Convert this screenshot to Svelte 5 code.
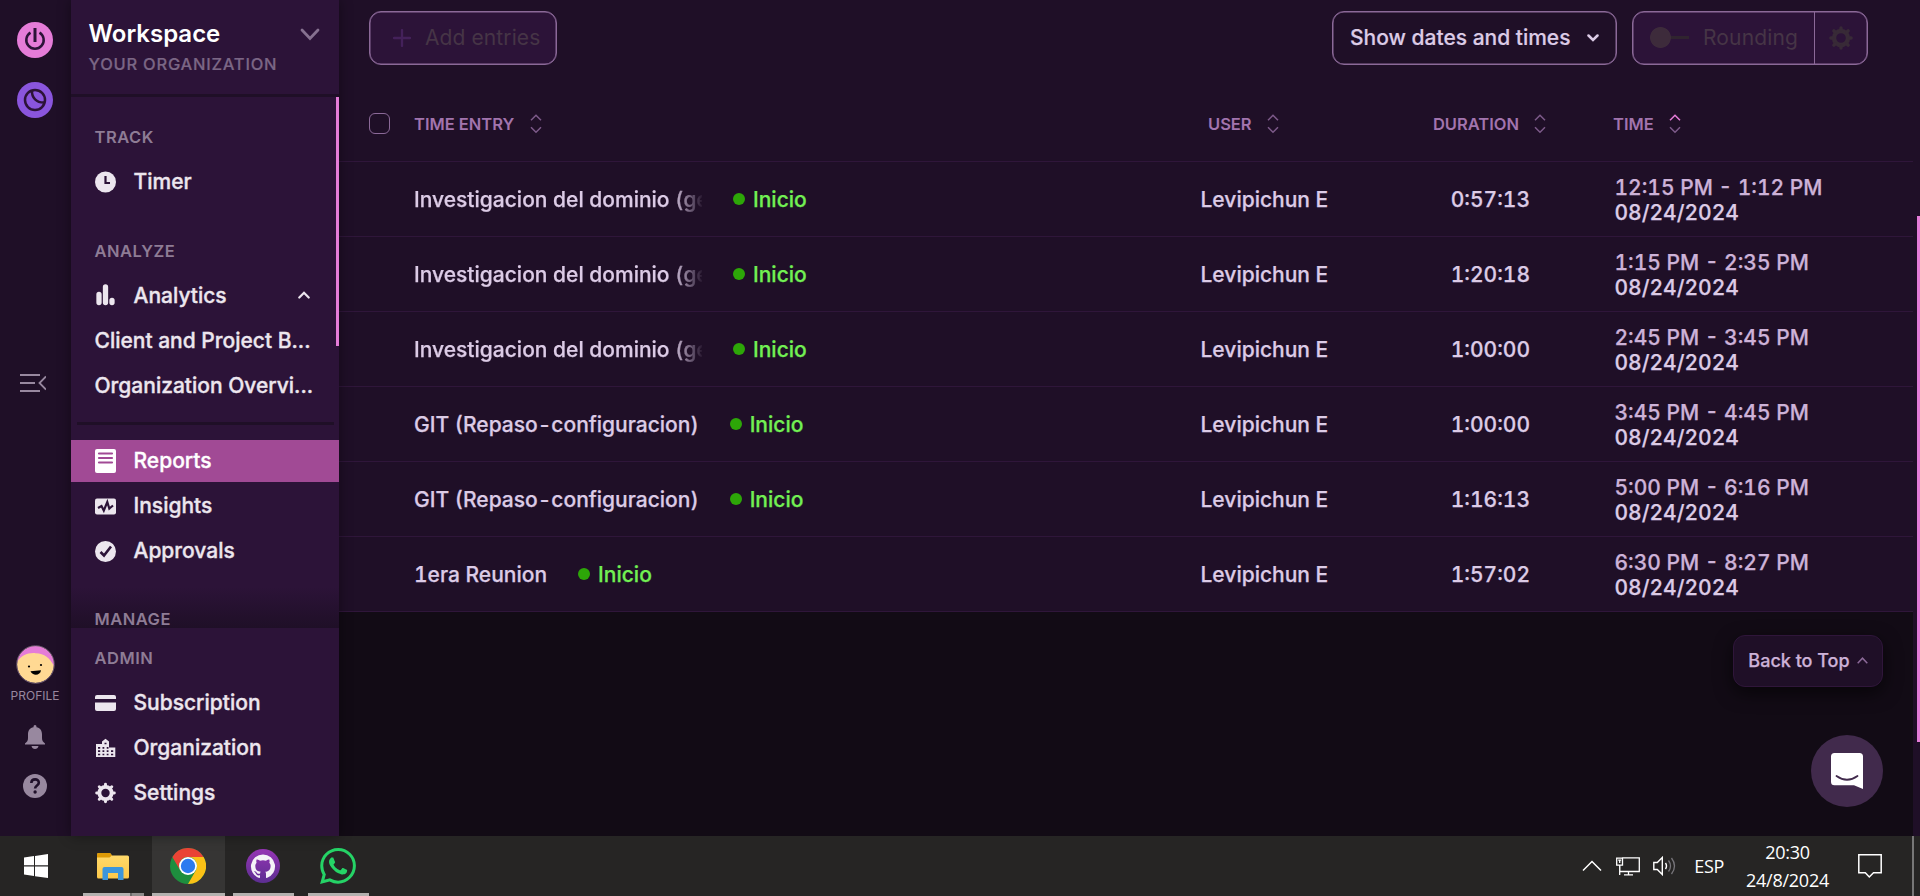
<script>
  const rows = [
    { name: 'Investigacion del dominio (ge', fade: true, dur: '0:57:13', time: '12:15 PM - 1:12 PM' },
    { name: 'Investigacion del dominio (ge', fade: true, dur: '1:20:18', time: '1:15 PM - 2:35 PM' },
    { name: 'Investigacion del dominio (ge', fade: true, dur: '1:00:00', time: '2:45 PM - 3:45 PM' },
    { name: 'GIT (Repaso-configuracion)', dur: '1:00:00', time: '3:45 PM - 4:45 PM' },
    { name: 'GIT (Repaso-configuracion)', dur: '1:16:13', time: '5:00 PM - 6:16 PM' },
    { name: '1era Reunion', dur: '1:57:02', time: '6:30 PM - 8:27 PM' }
  ];
  const teeth = [0, 45, 90, 135, 180, 225, 270, 315];
</script>

{#snippet sort(up)}
  <svg class="sort" class:up width="12" height="20" viewBox="0 0 12 20"><path class="a" d="M1 6.2 6 1.2l5 5" /><path d="M1 13.3l5 5 5-5" /></svg>
{/snippet}

{#snippet gear(size, color)}
  <svg width={size} height="24" viewBox="0 0 24 24"><g fill="none" stroke={color}><circle cx="12" cy="12" r="7" stroke-width="4.400" />{#each teeth as t}<path d="M12 3.500V1.900" stroke-width="3.400" stroke-linecap="round" transform="rotate({t} 12 12)" />{/each}</g></svg>
{/snippet}

<div class="screen">
  <div class="app">
    <aside class="rail">
      <div class="top">
        <svg width="36" height="36" viewBox="0 0 36 36"><circle cx="18" cy="18" r="18" fill="#e57cd8" /><path d="M13.5 10.6a8.7 8.7 0 1 0 9 0" fill="none" stroke="#2c1338" stroke-width="2.5" /><path d="M18 6v14" stroke="#2c1338" stroke-width="3" /></svg>
        <svg width="36" height="36" viewBox="0 0 36 36"><circle cx="18" cy="18" r="18" fill="#8a55dd" /><g fill="none" stroke="#2c1338" stroke-width="2.5"><circle cx="18" cy="18" r="10" /><path d="M15 8.5c-.5 7 4.500 12.500 12.700 12" /></g></svg>
      </div>
      <svg class="collapse" width="26" height="20" viewBox="0 0 26 20"><path d="M0 2h20M0 10h15M0 18h20M26 3.500l-6.500 6.500 6.500 6.500" fill="none" stroke="#98889f" stroke-width="1.8" /></svg>
      <div class="bottom">
        <svg width="39" height="39" viewBox="0 0 39 39"><defs><clipPath id="face"><circle cx="19.500" cy="19.500" r="18.500" /></clipPath></defs><g clip-path="url(#face)"><rect width="39" height="39" fill="#ffd993" /><path d="M0 19C4 11 11 7.500 19.500 8.200C28 8 34 13 38 21V0H0z" fill="#e57cd8" /></g><circle cx="19.500" cy="19.500" r="18.800" fill="none" stroke="#6d5a72" stroke-width="1" /><circle cx="13" cy="21.500" r="1.100" /><circle cx="25" cy="20" r="1.100" /><path d="M14.500 26.300l10.500-1c-.5 5.500-8.500 6-10.500 1z" /></svg>
        <span>PROFILE</span>
        <svg class="bell" width="20" height="25" viewBox="0 0 20 25"><path d="M10 0c1 0 1.500.7 1.500 2.300C15 3 17 5.500 17 9.500V13c0 2.500 1 4 3 5.500V19.500H0V18.500C2 17 3 15.500 3 13V9.500C3 5.500 5 3 8.500 2.300 8.500.7 9 0 10 0zM6.500 21h7c-.5 4-6.500 4-7 0z" fill="#98889f" /></svg>
        <svg width="24" height="24" viewBox="0 0 24 24"><circle cx="12" cy="12" r="12" fill="#98889f" /><path d="M8.300 9c.2-5 7.700-4.600 7.500-.3 0 2.800-3.700 2.700-3.700 5.800" fill="none" stroke="#20102a" stroke-width="2.600" /><circle cx="12.100" cy="18" r="1.700" fill="#20102a" /></svg>
      </div>
    </aside>

    <nav class="side">
      <header>
        <div class="ws"><b>Workspace</b><svg width="20" height="13" viewBox="0 0 20 13"><path d="M2 2l8 8.500L18 2" fill="none" stroke="#867190" stroke-width="2.800" stroke-linecap="round" /></svg></div>
        <small>YOUR ORGANIZATION</small>
      </header>
      <div class="scroll">
        <h4 class="first">TRACK</h4>
        <div class="item"><svg width="21" height="24" viewBox="0 0 21 24"><circle cx="10.500" cy="13" r="10.500" fill="#ece6ee" /><path d="M10.500 7v7H15" fill="none" stroke="#2c1338" stroke-width="2.200" /></svg>Timer</div>
        <h4 class="second">ANALYZE</h4>
        <div class="item"><svg width="21" height="24" viewBox="0 0 21 24"><path d="M4 11.500V19.500M10.500 4v15.500M17 17.300v2.200" stroke="#ece6ee" stroke-width="5.300" stroke-linecap="round" /></svg>Analytics<svg class="chev" width="12" height="8" viewBox="0 0 12 8"><path d="M1.300 6.500 6 1.800l4.700 4.700" fill="none" stroke="#ece6ee" stroke-width="2.200" stroke-linecap="round" /></svg></div>
        <div class="item plain">Client and Project B...</div>
        <div class="item plain">Organization Overvi...</div>
        <hr />
        <div class="item active"><svg width="21" height="24" viewBox="0 0 21 24"><rect width="21" height="24" rx="2" fill="#fff" /><path d="M4 4.500h13M4 9h13M4 13.500h13" stroke="#a14a95" stroke-width="2.200" stroke-linecap="round" /></svg>Reports</div>
        <div class="item"><svg width="21" height="24" viewBox="0 0 21 24"><rect y="4.500" width="21" height="16" rx="2" fill="#ece6ee" /><path d="M3 14l3.500-2 2.300 4.500L12.300 8l2 6.500L18 11.500" fill="none" stroke="#2c1338" stroke-width="2.200" /></svg>Insights</div>
        <div class="item"><svg width="21" height="24" viewBox="0 0 21 24"><circle cx="10.500" cy="12.500" r="10.500" fill="#ece6ee" /><path d="M5.500 13l3.500 3.500 7-9" fill="none" stroke="#2c1338" stroke-width="2.600" /></svg>Approvals</div>
        <h4 class="manage">MANAGE</h4>
      </div>
      <div class="admin">
        <h4>ADMIN</h4>
        <div class="item"><svg width="21" height="24" viewBox="0 0 21 24"><path d="M2 5h17a2 2 0 0 1 2 2v2H0V7a2 2 0 0 1 2-2zM0 12.500h21V19a2 2 0 0 1-2 2H2a2 2 0 0 1-2-2z" fill="#ece6ee" /></svg>Subscription</div>
        <div class="item"><svg width="21" height="24" viewBox="0 0 21 24"><path d="M1 9h6V6.500L10.500 3.800 14 6.500V12.500h6.300V22H1z" fill="#ece6ee" /><path d="M3 12.800h2.200M3 16.200h2.200M3 19.500h2.200M7.500 12.800h1.800M7.500 16.200h1.800M7.500 19.500h1.800M11.700 12.800h1.800M11.700 16.200h1.800M11.700 19.500h1.800M16 16.200h2.200M16 19.500h2.200M9.500 8.500h2" stroke="#2c1338" stroke-width="1.700" /></svg>Organization</div>
        <div class="item gearitem">{@render gear(21, '#ece6ee')}Settings</div>
      </div>
      <i class="thumb"></i>
    </nav>

    <main>
      <div class="toolbar">
        <div class="btn add"><svg width="18" height="18" viewBox="0 0 18 18"><path d="M9 1v16M1 9h16" stroke="#44215a" stroke-width="2.300" stroke-linecap="round" /></svg>Add entries</div>
        <div class="btn show">Show dates and times<svg width="12" height="8" viewBox="0 0 12 8"><path d="M1.500 1.500 6 6l4.500-4.500" fill="none" stroke="#dccbe6" stroke-width="2.500" stroke-linecap="round" /></svg></div>
        <div class="btn round">
          <div class="tog"><i></i>Rounding</div>
          <div class="cog">{@render gear(24, '#382a37')}</div>
        </div>
      </div>
      <div class="table">
        <div class="row head">
          <div class="c1"><i class="check"></i>TIME ENTRY{@render sort(false)}</div>
          <div class="c2">USER{@render sort(false)}</div>
          <div class="c3">DURATION{@render sort(false)}</div>
          <div class="c4">TIME{@render sort(true)}</div>
        </div>
        {#each rows as r}
          <div class="row">
            <div class="c1"><span class="name" class:fade={r.fade}>{r.name}</span><i class="dot"></i><span class="proj">Inicio</span></div>
            <div class="c2">Levipichun E</div>
            <div class="c3">{r.dur}</div>
            <div class="c4"><span>{r.time}</span><span>08/24/2024</span></div>
          </div>
        {/each}
      </div>
      <i class="track"></i>
      <div class="totop">Back to Top<svg width="11" height="7" viewBox="0 0 11 7"><path d="M.7 6.200 5.500 1.200l4.800 5" fill="none" stroke="#8c6a99" stroke-width="1.500" /></svg></div>
      <div class="chat"><svg width="32" height="36" viewBox="0 0 32 36"><path d="M3.500 0h25A3.500 3.500 0 0 1 32 3.500V36l-9-3.700H3.500A3.500 3.500 0 0 1 0 28.800V3.500A3.500 3.500 0 0 1 3.500 0z" fill="#fff" /><path d="M5.500 23q10.500 7.500 21 0" fill="none" stroke="#412a4c" stroke-width="1.800" stroke-linecap="round" /></svg></div>
    </main>
  </div>

  <footer>
    <div class="task start"><svg width="24" height="24" viewBox="0 0 24 24"><path d="M0 3.500 10 2v9.300H0zM11 1.900 24 0v11.300H11zM0 12.500h10V22L0 20.500zM11 12.500h13V24L11 22.200z" fill="#fff" /></svg></div>
    <div class="task files"><svg width="32" height="28" viewBox="0 0 32 28"><defs><linearGradient id="fold" x1="0" y1="0" x2="0" y2="1"><stop offset="0" stop-color="#ffdb6e" /><stop offset="1" stop-color="#fdc94a" /></linearGradient></defs><path d="M0 1.500Q0 0 1.500 0H13l2 2.500h15.500Q32 2.500 32 4v20q0 1.500-1.500 1.500h-29Q0 25.500 0 24z" fill="url(#fold)" /><path d="M0 4.500V1.500Q0 0 1.500 0H13l2 2.500-2.500 2z" fill="#dd9a06" /><path d="M5.500 27V16q0-2 2-2h17q2 0 2 2v11H21v-7H11v7z" fill="#3c96dc" /></svg></div>
    <div class="task chrome"><svg width="36" height="36" viewBox="0 0 36 36"><circle cx="18" cy="18" r="18" fill="#1e8e3e" /><path d="M2.400 9A18 18 0 0 1 33.600 9H18a9 9 0 0 0-7.800 13.500z" fill="#ea4335" /><path d="M33.600 9A18 18 0 0 1 18 36l7.800-13.500A9 9 0 0 0 18 9z" fill="#fbc116" /><circle cx="18" cy="18" r="9" fill="#fff" /><circle cx="18" cy="18" r="7.200" fill="#2c7bf0" /></svg></div>
    <div class="task git"><svg width="34" height="34" viewBox="0 0 34 34"><defs><linearGradient id="gh" x1="0" y1="0" x2="0" y2="1"><stop offset="0" stop-color="#9535b4" /><stop offset="1" stop-color="#5c2e91" /></linearGradient></defs><circle cx="17" cy="17" r="17" fill="url(#gh)" /><path transform="translate(5 5.200)" fill="#f4f2f7" d="M12 .3a12 12 0 0 0-3.800 23.400c.6.1.8-.3.8-.6v-2c-3.300.7-4-1.600-4-1.600-.600-1.400-1.400-1.800-1.400-1.800-1-.700.1-.700.1-.700 1.200 0 1.900 1.200 1.900 1.200 1 1.800 2.800 1.300 3.500 1 0-.8.4-1.300.7-1.600-2.700-.3-5.500-1.300-5.500-6 0-1.200.5-2.300 1.300-3.100-.2-.4-.6-1.600 0-3.200 0 0 1-.3 3.400 1.200a11.500 11.500 0 0 1 6 0c2.300-1.500 3.300-1.200 3.300-1.200.6 1.600.2 2.800 0 3.200.9.800 1.300 1.900 1.300 3.200 0 4.600-2.800 5.600-5.500 5.900.5.4.9 1 .9 2.200v3.300c0 .3.1.7.8.6A12 12 0 0 0 12 .3" /></svg></div>
    <div class="task wa"><svg width="36" height="36" viewBox="0 0 24 24"><path fill="#25d366" d="M17.472 14.382c-.297-.149-1.758-.867-2.030-.967-.273-.099-.471-.148-.670.150-.197.297-.767.966-.940 1.164-.173.199-.347.223-.644.075-.297-.150-1.255-.463-2.390-1.475-.883-.788-1.480-1.761-1.653-2.059-.173-.297-.018-.458.130-.606.134-.133.298-.347.446-.520.149-.174.198-.298.298-.497.099-.198.050-.371-.025-.520-.075-.149-.669-1.612-.916-2.207-.242-.579-.487-.500-.669-.510-.173-.008-.371-.010-.570-.010-.198 0-.520.074-.792.372-.272.297-1.040 1.016-1.040 2.479 0 1.462 1.065 2.875 1.213 3.074.149.198 2.096 3.200 5.077 4.487.709.306 1.262.489 1.694.625.712.227 1.360.195 1.871.118.571-.085 1.758-.719 2.006-1.413.248-.694.248-1.289.173-1.413-.074-.124-.272-.198-.570-.347m-5.421 7.403h-.004a9.870 9.870 0 0 1-5.031-1.378l-.361-.214-3.741.982.998-3.648-.235-.374a9.860 9.860 0 0 1-1.510-5.260c.001-5.450 4.436-9.884 9.888-9.884 2.640 0 5.122 1.030 6.988 2.898a9.825 9.825 0 0 1 2.893 6.994c-.003 5.450-4.437 9.884-9.885 9.884m8.413-18.297A11.815 11.815 0 0 0 12.050 0C5.495 0 .160 5.335.157 11.892c0 2.096.547 4.142 1.588 5.945L.057 24l6.305-1.654a11.882 11.882 0 0 0 5.683 1.448h.005c6.554 0 11.890-5.335 11.893-11.893a11.821 11.821 0 0 0-3.480-8.413Z" /></svg></div>
    <div class="tray">
      <svg class="t1" width="20" height="12" viewBox="0 0 20 12"><path d="M1 10.500 10 1.500l9 9" fill="none" stroke="#fff" stroke-width="1.500" /></svg>
      <svg class="t2" width="24" height="19" viewBox="0 0 24 19"><path d="M6 .8h17.300v13.700H3.800V8.500M12.500 14.500v3M8 17.800h9M.7 1.200h5.800v7H.7zM2.200 3.200h3M3.700 3v3M3.700 8v10" fill="none" stroke="#fff" stroke-width="1.300" /></svg>
      <svg class="t3" width="23" height="20" viewBox="0 0 23 20"><path d="M.8 6.500h3.500l5-5v17l-5-5H.8zM12.500 7q2 3 0 6" fill="none" stroke="#fff" stroke-width="1.400" /><path d="M15.500 4.500q4 5.500 0 11M18.500 2q6 8 0 16" fill="none" stroke="#77757a" stroke-width="1.300" /></svg>
      <span class="lang">ESP</span>
      <div class="clock"><span>20:30</span><span>24/8/2024</span></div>
      <svg class="note" width="24" height="25" viewBox="0 0 24 25"><path d="M.8.8h22.400v18H15.500L11.300 23 7.300 18.800H.8z" fill="none" stroke="#fff" stroke-width="1.500" /></svg>
      <i class="peek"></i>
    </div>
  </footer>
</div>

<style>
  :global(body) { background: #120b15; overflow: hidden; }
  .screen { width: 1920px; height: 896px; display: flex; flex-direction: column; font-family: Inter, sans-serif; font-size: 21px; font-weight: 500; overflow: hidden; box-sizing: border-box; }
  .screen * { box-sizing: border-box; }
  svg { display: block; flex: none; }
  .app { height: 836px; display: flex; }
  .rail { width: 71px; background: #1f0f27; display: flex; flex-direction: column; align-items: center; padding: 22px 1px 38px 0; }
  .top { display: flex; flex-direction: column; gap: 24px; }
  .collapse { margin: 255px 4px 0 0; }
  .bottom { margin-top: auto; display: flex; flex-direction: column; align-items: center; color: #98889f; font-size: 12px; font-weight: 400; }
  .bottom span { margin: 4px 0 21px; line-height: 16px; }
  .bell { margin-bottom: 24px; }
  .side { width: 268px; background: #2c1338; display: flex; flex-direction: column; position: relative; z-index: 1; box-shadow: 0 0 12px #0006; color: #ece6ee; }
  header { height: 97px; border-bottom: 3px solid #1f0f27; padding: 18px 19px 0 17.5px; }
  .ws { display: flex; justify-content: space-between; align-items: center; color: #fff; font-size: 24px; line-height: 32px; }
  .ws b { font-weight: 600; }
  small { display: block; font-size: 16.5px; line-height: 24px; margin-top: 2px; color: #7b6685; letter-spacing: .75px; -webkit-text-stroke: .2px; }
  .scroll { height: 531px; overflow: hidden; background: linear-gradient(#2c1338 0 490px, #1f0f27 531px); }
  h4 { margin: 0; padding-left: 23.5px; font-size: 16.5px; line-height: 20px; font-weight: 600; color: #8e7c95; letter-spacing: .5px; }
  .first { padding-top: 30px; margin-bottom: 13px; }
  .second { margin: 39px 0 13px; }
  .manage { margin-top: 38px; line-height: 19px; }
  .item { height: 42px; margin-bottom: 3px; padding-left: 24px; display: flex; align-items: center; gap: 17.5px; white-space: nowrap; -webkit-text-stroke: .35px; }
  .plain { padding-left: 23.5px; }
  .item .chev { margin-left: auto; margin-right: 29px; }
  .active { background: #a14a95; color: #fff; }
  .active, .active ~ .item { padding-bottom: 1px; }
  hr { height: 3px; border: 0; background: #1f0f27; margin: 16px 5px 15px 6px; }
  .admin { height: 208px; padding-top: 20px; }
  .admin h4 { margin-bottom: 13px; }
  .gearitem svg { margin-top: 2px; }
  .thumb { position: absolute; right: 0; top: 97px; width: 3px; height: 249px; background: #e57cd8; }
  main { flex: 1; background: #120b15; position: relative; }
  .toolbar { height: 87px; background: #1f0f27; padding: 11px 52px 0 30px; display: flex; align-items: flex-start; }
  .btn { height: 54px; border: 1px solid #8b6998; box-shadow: inset 0 0 0 .5px #8b6998; border-radius: 12px; display: flex; align-items: center; padding-bottom: 1px; }
  .add { width: 188px; background: #2c1338; color: #463546; font-weight: 400; padding-left: 23px; gap: 14px; letter-spacing: .1px; }
  .show { width: 285px; margin: 0 15px 0 auto; padding: 0 17px 1px; justify-content: space-between; color: #dccbe6; -webkit-text-stroke: .2px; }
  .round { width: 236px; background: #2c1338; color: #463546; font-weight: 400; padding-bottom: 0; }
  .tog { width: 182px; height: 100%; border-right: 1px solid #8b6998; display: flex; align-items: center; padding: 0 0 1px 17px; gap: 14px; letter-spacing: .15px; }
  .tog i { width: 39px; height: 21px; background: radial-gradient(circle at 10.500px 50%, #3d2b3b 10px, transparent 10.800px), linear-gradient(#30242f, #30242f) 0 50% / 39px 3px no-repeat; }
  .cog { flex: 1; display: flex; justify-content: center; padding-right: 1px; }
  .table { width: 1574px; }
  .row { height: 75px; border-bottom: 1px solid #2f163a; background: #1f0f27; display: flex; align-items: center; color: #dccbe6; font-feature-settings: 'tnum'; -webkit-text-stroke: .25px; }
  .row > div { display: flex; align-items: center; }
  .head { color: #a274ae; font-size: 16.5px; font-weight: 600; font-feature-settings: normal; -webkit-text-stroke: 0; }
  .c1 { width: 861.5px; padding-left: 75px; white-space: nowrap; }
  .c2 { width: 212.5px; }
  .row .c3 { width: 117px; justify-content: flex-end; }
  .row .c4 { margin-left: 84.5px; padding-top: 2px; flex-direction: column; align-items: flex-start; line-height: 25px; }
  .c4 span:first-child { color: #cdb2d8; }
  .head .c1 { padding-left: 30px; }
  .head .c2 { padding-left: 7.5px; }
  .row.head .c3 { width: 133px; }
  .row.head .c4 { margin-left: 67px; padding-top: 0; flex-direction: row; align-items: center; }
  .check { width: 21px; height: 21px; border: 1px solid #8b6998; border-radius: 6px; margin: 0 24px 2px 0; }
  .sort { margin-left: 15px; fill: none; stroke: #7d5a8a; stroke-width: 1.500; }
  .c1 .sort { margin-left: 16px; }
  .up .a { stroke: #e57cd8; }
  .fade { width: 288px; mask-image: linear-gradient(90deg, #000 258px, transparent 290px); }
  .dot { width: 12px; height: 12px; border-radius: 50%; background: #2da608; margin: 0 8px 0 31px; }
  .proj { color: #72f053; }
  .track { position: absolute; right: 0; top: 0; width: 7px; height: 836px; background: linear-gradient(#e57cd8, #e57cd8) 4px 216px / 3px 526px no-repeat #1f0f27; }
  .totop { position: absolute; left: 1394px; top: 635px; width: 150px; height: 52px; border: 1px solid #2f163a; border-radius: 12px; background: #1f0f27; box-shadow: 0 6px 18px #0009; display: flex; align-items: center; justify-content: center; padding-bottom: 1px; gap: 7px; font-size: 18px; color: #cdb2d8; -webkit-text-stroke: .25px; }
  .chat { position: absolute; left: 1472px; top: 735px; width: 72px; height: 72px; border-radius: 50%; background: #412a4c; display: flex; align-items: center; justify-content: center; }
  footer { height: 60px; background: #262524; display: flex; color: #fff; font: 400 18px 'Open Sans', sans-serif; }
  .task { height: 60px; display: flex; align-items: center; justify-content: center; }
  .start { width: 72px; }
  .files, .chrome, .git, .wa { background: linear-gradient(#b3b1af, #b3b1af) 0 100% / 100% 3px no-repeat; padding-right: 2px; }
  .files { width: 61px; margin: 0 8px 0 11px; padding-top: 2px; background-image: linear-gradient(90deg, #b3b1af 47px, #6c6b6a 47px 49px, #8e8c8b 49px); }
  .chrome { width: 73px; background-color: #363534; }
  .git { width: 61px; margin: 0 14px 0 8px; }
  .wa { width: 61px; }
  .tray { margin-left: auto; display: flex; align-items: center; }
  .t2 { margin: 0 13px 0 14px; }
  .lang { margin: 0 22px 0 18px; letter-spacing: -.3px; }
  .clock { display: flex; flex-direction: column; align-items: center; line-height: 28px; letter-spacing: -.25px; }
  .note { margin: 0 30px 0 29px; }
  .peek { width: 8px; height: 60px; border-left: 2px solid #777; }
</style>
